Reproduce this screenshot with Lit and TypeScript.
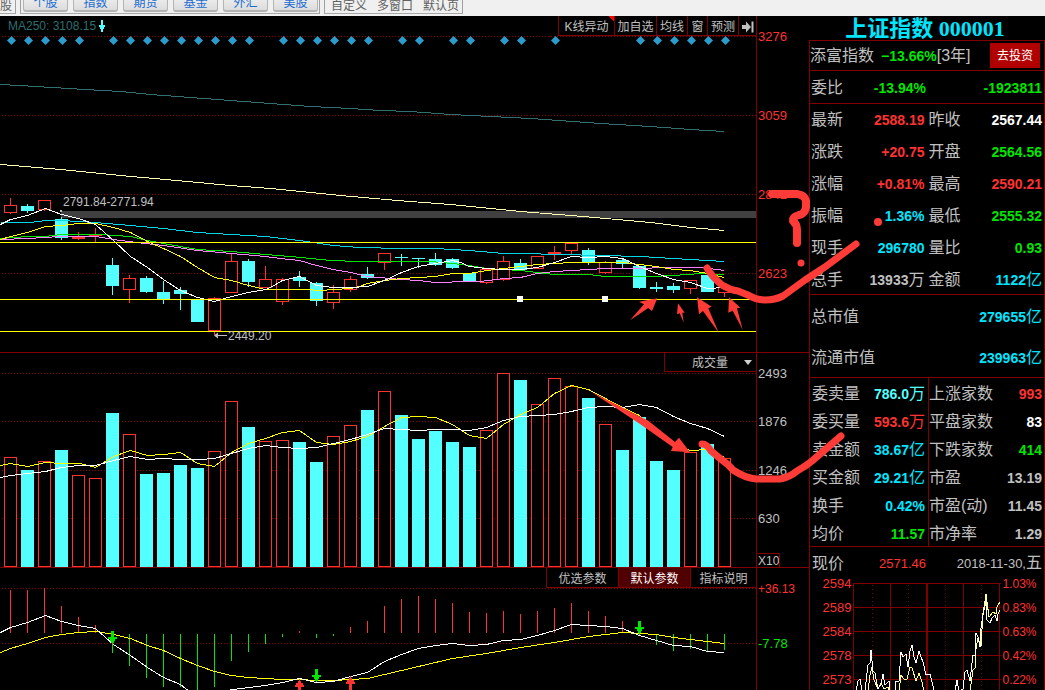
import { LitElement, html, svg, css } from "lit";
import { customElement } from "lit/decorators.js";

const STEP = 17;
const cx = (i: number) => 10 + STEP * i;

type Candle = [string, number, number, number, number];

// kind, high, body top, body bottom, low
const CANDLES: Candle[] = [
  ["r", 198, 205, 213, 214], ["c", 204, 206, 211, 213], ["r", 200, 200, 210, 211], ["c", 217, 219, 238, 240],
  ["r", 232, 237, 239, 240], ["r", 228, 235, 236, 242], ["c", 258, 265, 286, 295], ["r", 275, 278, 290, 303],
  ["c", 276, 278, 292, 293], ["c", 281, 292, 299, 304], ["c", 287, 290, 294, 310], ["c", 299, 299, 322, 322],
  ["r", 297, 298, 331, 335], ["r", 253, 261, 293, 293], ["c", 259, 261, 282, 287], ["r", 266, 279, 288, 288],
  ["r", 278, 279, 302, 305], ["c", 271, 277, 281, 287], ["c", 282, 283, 301, 306], ["r", 285, 292, 303, 309],
  ["r", 276, 279, 290, 292], ["c", 267, 274, 278, 279], ["r", 253, 253, 263, 270], ["c", 254, 257, 258, 266],
  ["c", 258, 258, 259, 268], ["c", 253, 259, 265, 266], ["c", 258, 259, 268, 269], ["c", 273, 273, 281, 281],
  ["r", 269, 269, 283, 284], ["r", 256, 261, 280, 281], ["c", 259, 263, 270, 270], ["r", 256, 256, 269, 269],
  ["r", 246, 252, 254, 260], ["r", 243, 243, 251, 254], ["c", 248, 250, 263, 265], ["r", 261, 262, 273, 274],
  ["c", 259, 260, 264, 268], ["c", 266, 266, 288, 289], ["c", 282, 287, 289, 292], ["c", 283, 286, 290, 293],
  ["r", 280, 280, 289, 294], ["c", 275, 275, 292, 292], ["r", 287, 287, 293, 297],
];

const VOLUMES = [
  457, 470, 461, 450, 475, 478, 413, 434, 474, 473, 465, 468, 451, 401, 427, 441, 440, 442, 462, 436, 425, 410,
  391, 415, 439, 431, 442, 447, 430, 373, 380, 404, 378, 386, 398, 424, 450, 417, 461, 470, 452, 444, 458,
];

const MACD = [
  590, 590, 588, 606, 617, 625, 653, 666, 678, 687, 687, 692, 687, 661, 652, 644, 637, 631, 638, 636, 627, 621,
  606, 599, 596, 599, 603, 612, 613, 611, 614, 611, 608, 603, 611, 616, 621, 636, 645, 651, 649, 651, 650,
];

const MARKED = [
  0, 1, 2, 3, 4, 6, 7, 8, 9, 10, 11, 12, 13, 14, 16, 17, 18, 19, 20, 21, 23, 24, 26, 27, 29, 30, 32, 37, 38, 39,
  40, 41, 42,
];

const PRICE_LINES: [string, string][] = [
  ["#2f6f70", "0,84 19,85 52,87 85,89 120,91 150,94 190,97 230,100 270,103 310,106 350,108 380,110 410,111 450,114 490,116 530,118 558,120 600,123 650,126 690,129 724,131"],
  ["#ffffb0", "0,164 60,169 120,175 176,180 230,185 270,188 340,195 397,200 450,204 520,211 583,216 650,222 690,227 724,230"],
  ["#00d8e8", "0,222 30,222 45,220 61,220 95,222 130,225 163,228 197,232 231,234 265,236 299,240 333,245 359,247 401,248 435,248 469,250 503,253 520,253 560,254 600,255 640,256 673,258 724,261"],
  ["#00e600", "0,238 27,236 45,236 61,234 100,234 130,236 147,240 163,243 197,249 231,251 265,254 290,256 330,260 359,261 430,261 452,263 469,265 486,268 520,270 537,272 554,274 588,274 605,276 650,276 673,275 700,273 724,274"],
  ["#ff80ff", "0,239 27,238 60,236 95,236 113,239 136,242 163,245 197,250 231,253 265,256 280,258 299,260 316,265 333,269 350,272 367,276 401,279 418,280 435,282 469,281 480,281 503,278 520,277 537,273 554,271 571,270 588,269 605,268 700,267 724,270"],
  ["#ffff00", "0,239 10,236 27,232 45,226 61,225 78,223 95,223 113,227 130,232 147,241 163,248 180,256 197,267 214,277 231,280 248,285 265,289 305,289 320,290 333,289 350,288 359,286 367,283 384,280 401,278 418,277 435,276 452,273 469,273 486,270 503,268 520,266 537,264 554,263 571,262 588,262 622,262 639,264 656,266 673,269 690,270 707,273 724,277"],
  ["#ffffff", "0,224 10,219 27,215 45,208 61,214 78,218 95,224 113,240 130,256 147,267 163,279 180,290 197,297 214,301 231,296 248,292 265,289 270,287 282,280 299,276 316,285 333,287 350,287 367,286 384,280 401,272 418,266 435,263 452,260 460,262 469,266 486,268 503,269 520,269 537,267 554,262 571,256 588,257 605,256 622,258 639,266 656,273 673,279 690,282 707,288 724,287"],
];

const VOLUME_LINES: [string, string][] = [
  ["#ffff00", "0,465 10,463 27,466 45,462 61,463 80,463 95,467 113,456 130,450 147,455 163,454 180,452 197,463 214,466 231,452 248,443 265,438 282,432 299,430 316,442 333,444 350,441 367,436 384,426 401,417 418,416 435,417 452,424 469,435 486,438 503,424 520,414 537,407 554,393 571,385 588,389 605,398 622,407 639,415 650,425 665,437 680,447 690,450 707,449 724,457"],
  ["#ffffff", "0,477 10,475 27,473 45,471 61,467 78,465 95,465 113,460 130,456 147,459 163,458 180,459 200,459 214,458 231,453 248,448 265,445 282,447 299,448 316,447 333,443 350,439 367,434 384,428 400,429 418,430 435,429 452,429 469,430 486,427 503,420 520,416 554,414 571,411 588,407 605,406 622,407 639,404 656,407 673,416 690,423 707,428 724,436"],
];

const MACD_LINES: [string, string][] = [
  ["#ffff00", "0,652 10,648 27,643 45,637 61,634 78,632 95,631 113,634 130,638 147,645 163,650 180,658 197,665 214,671 231,675 248,677 282,679 333,680 367,678 384,674 401,670 418,666 452,658 486,653 520,647 554,642 588,636 622,632 639,633 656,634 673,637 707,641 724,643"],
  ["#ffffff", "0,632 10,627 27,622 45,615 61,621 78,625 95,628 113,644 130,655 147,667 163,677 180,684 190,692 210,694 232,689 265,685 282,682 299,678 316,682 333,681 350,676 367,672 384,661 401,654 418,648 435,645 452,643 469,645 486,644 503,640 520,639 537,635 554,630 571,624 588,625 605,626 622,628 639,635 656,640 673,645 690,646 707,651 724,652"],
];

const lines = (set: [string, string][]) =>
  set.map(([color, points]) => svg`<polyline class="ma" stroke=${color} points=${points} transform="translate(0.5 0.5)"/>`);

const grid = (ys: number[]) =>
  ys.map((y) => svg`<line class="dots" x1="2" x2="100%" y1=${y + 0.5} y2=${y + 0.5}/>`);

const candle = ([kind, high, top, bottom, low]: Candle, i: number) => {
  const x = cx(i);
  const h = bottom - top;
  const hollow = kind === "r" && h > 2;
  return svg`
    <rect class=${kind} x=${x} y=${high} width="1" height=${Math.max(0, top - high)}/>
    <rect class=${kind} x=${x} y=${bottom} width="1" height=${Math.max(0, low - bottom)}/>
    ${hollow
      ? svg`<rect class="hollow" x=${x - 5.5} y=${top + 0.5} width="12" height=${h - 1}/>`
      : svg`<rect class=${kind} x=${x - 6} y=${top} width="13" height=${h}/>`}`;
};

const volumeBar = (top: number, i: number) =>
  CANDLES[i][0] === "r"
    ? svg`<rect class="hollow" x=${cx(i) - 5.5} y=${top + 0.5} width="12" height=${566 - top}/>`
    : svg`<rect class="c" x=${cx(i) - 6} y=${top} width="13" height=${567 - top}/>`;

const macdBar = (y: number, i: number) =>
  y < 633
    ? svg`<rect class="r" x=${cx(i)} y=${y} width="1" height=${633 - y}/>`
    : svg`<rect class="g" x=${cx(i)} y="634" width="1" height=${y - 634}/>`;

const down = (x: number, y: number) =>
  svg`<path class="g" d="M${x - 1} ${y}h3v6h3v2h-2v2h-1v2h-1v1h-1v-1h-1v-2h-1v-2h-2v-2h3z"/>`;
const up = (x: number, y: number) =>
  svg`<path class="r" d="M${x} ${y}h1v2h1v2h2v2h1v2h-3v7h-3v-7h-3v-2h1v-2h2v-2h1z"/>`;

const axis = (labels: [string, number][], tone: string, size = "") =>
  labels.map(([t, y]) => svg`<text class="tick ${tone} ${size}" x="1" y=${y + 5}>${t}</text>`);

type Row = [string, string, string, string?];

const table = (rows: Row[]) => html`
  <table>
    <tbody>
      ${rows.map(([label, value, tone, unit]) => html`
        <tr><th scope="row">${label}</th><td class=${tone}>${value}${unit ? html`<span class="unit">${unit}</span>` : ""}</td></tr>`)}
    </tbody>
  </table>`;

@customElement("top-bar")
export class TopBar extends LitElement {
  static styles = css`
    :host {
      display: flex;
      height: 14px;
      border-bottom: 2px solid #f0f0f0;
      background: #f0f0f0;
      font: 12px/14px "Liberation Sans", "Noto Sans CJK SC", sans-serif;
      color: #606060;
    }
    .group {
      display: flex;
      align-items: flex-end;
      box-sizing: border-box;
      border-right: 1px solid #a0a0a0;
      border-bottom: 1px solid #a8a8a8;
    }
    .first { width: 16px; }
    .markets { gap: 5px; width: 300px; margin-left: 4px; padding: 0 0 1px 2px; border-left: 1px solid #a0a0a0; }
    .links { gap: 10px; width: 139px; margin-left: 4px; padding-left: 6px; border-left: 1px solid #a0a0a0; }
    button {
      flex: none;
      box-sizing: border-box;
      width: 45px;
      height: 20px;
      padding: 2px 0 0;
      border: 1px solid #b4b4b4;
      border-bottom-width: 2px;
      border-radius: 3px;
      background: linear-gradient(#f4f4f4, #dcdcdc);
      font: inherit;
      line-height: 14px;
      color: #1c6cd0;
    }
    a { color: inherit; text-decoration: none; white-space: nowrap; }
  `;
  render() {
    return html`
      <div class="group first"><a href="#">股</a></div>
      <div class="group markets">
        ${["个股", "指数", "期货", "基金", "外汇", "美股"].map((t) => html`<button>${t}</button>`)}
      </div>
      <nav class="group links">
        ${["自定义", "多窗口", "默认页"].map((t) => html`<a href="#">${t}</a>`)}
      </nav>`;
  }
}

@customElement("chart-area")
export class ChartArea extends LitElement {
  static styles = css`
    :host {
      display: flex;
      flex-direction: column;
      font: 12px/16px "Liberation Sans", "Noto Sans CJK SC", sans-serif;
      color: #c0c0c0;
    }
    .panel { display: flex; position: relative; border-bottom: 1px solid #800000; }
    .price { height: 336px; }
    .volume { height: 214px; }
    .macd { height: 122px; border-bottom: 0; }
    .plot { position: relative; flex: 1; min-width: 0; }
    svg { display: block; width: 100%; height: 100%; overflow: hidden; }
    .axis { flex: none; width: 52px; border-left: 1px solid #800000; }
    .ma { fill: none; stroke-width: 1; shape-rendering: crispEdges; }
    .dots { stroke: #900000; stroke-width: 1; stroke-dasharray: 1 2; shape-rendering: crispEdges; }
    .level { fill: #ffff00; shape-rendering: crispEdges; }
    .r { fill: #ff3232; shape-rendering: crispEdges; }
    .c { fill: #54ffff; shape-rendering: crispEdges; }
    .g { fill: #00e600; shape-rendering: crispEdges; }
    .hollow { fill: #000000; stroke: #ff3232; shape-rendering: crispEdges; }
    .band { fill: #404040; }
    .mark { fill: #2c9ccc; }
    .light { fill: #c0c0c0; }
    .white { fill: #ffffff; }
    .note { font-size: 12px; fill: #c0c0c0; }
    .teal { font-size: 12px; fill: #2f6f70; }
    .tick { font-size: 13px; }
    .tick.small { font-size: 12px; }
    .red { fill: #ff3232; }
    .green { fill: #00e600; }
    .box { fill: none; stroke: #800000; }
    .tools {
      position: absolute;
      top: 0;
      right: 0;
      display: flex;
      border-bottom: 1px solid #800000;
      background: #000000;
    }
    button {
      box-sizing: border-box;
      height: 19px;
      padding: 2px 0 0;
      border: 0;
      border-left: 1px solid #800000;
      background: none;
      font: inherit;
      color: inherit;
      white-space: nowrap;
    }
    .w18 { width: 18px; } .w20 { width: 20px; } .w31 { width: 31px; } .w42 { width: 42px; } .w56 { width: 56px; }
    .hot { background: linear-gradient(225deg, #ff0000 4px, transparent 4px); }
    .w72 { width: 72px; } .w66 { width: 66px; }
    .on { background: #500000; color: #ffffff; }
    .glyph { width: 14px; height: 12px; margin: auto; }
    .pick { position: absolute; top: 0; right: 0; }
    .pick::after {
      content: "";
      position: absolute;
      top: 7px;
      right: 4px;
      border: 4px solid transparent;
      border-top: 5px solid #d0d0d0;
      border-bottom: 0;
      pointer-events: none;
    }
    select {
      display: block;
      box-sizing: border-box;
      width: 92px;
      height: 19px;
      padding: 2px 0 0 27px;
      appearance: none;
      border: 1px solid #800000;
      border-width: 0 0 1px 1px;
      border-radius: 0;
      background: #000000;
      font: inherit;
      color: inherit;
    }
  `;
  render() {
    return html`
      <section class="panel price">
        <div class="plot">
          <svg><g transform="translate(0 -16)">
            ${grid([36, 115, 194, 273])}
            <rect class="band" x="61" y="211" width="100%" height="7"/>
            <rect class="light" x="60" y="210" width="2" height="2"/>
            ${MARKED.map((i) => svg`<path class="mark" d="M${cx(i) + 1.5} 36l4.5 4.5l-4.5 4.5l-4.5-4.5z"/>`)}
            ${CANDLES.map(candle)}
            ${lines(PRICE_LINES)}
            ${[242, 299, 331].map((y) => svg`<rect class="level" x="0" y=${y} width="100%" height="1"/>`)}
            <rect class="white" x="517" y="296" width="6" height="6"/>
            <rect class="white" x="602" y="296" width="6" height="6"/>
            <text class="teal" x="8" y="30">MA250: 3108.15</text>
            <path class="c" d="M101 20h2v5h2v2h-1v2h-1v3h-2v-3h-1v-2h-1v-2h2z"/>
            <text class="note" x="63" y="206">2791.84-2771.94</text>
            <path class="light" d="M214 335.5l4-3v2.5h9v1h-9v2.5z"/>
            <text class="note" x="228" y="340">2449.20</text>
          </g></svg>
          <div class="tools">
            <button class="w56 hot">K线异动</button><button class="w42">加自选</button><button class="w31">均线</button><button class="w20">窗</button><button class="w31">预测</button><button class="w18" aria-label="展开"><svg class="glyph" viewBox="0 0 14 12"><path class="light" d="M1 4h4V0.500L10 6L5 11.500V8H1zM10.500 0.500h2v11h-2z"/></svg></button>
          </div>
        </div>
        <div class="axis"><svg><g transform="translate(0 -16)">
          ${axis([["3276", 36], ["3059", 115], ["2841", 194], ["2623", 273]], "red")}
        </g></svg></div>
      </section>
      <section class="panel volume">
        <div class="plot">
          <svg><g transform="translate(0 -353)">
            ${grid([373, 421, 470, 518])}
            ${VOLUMES.map(volumeBar)}
            ${lines(VOLUME_LINES)}
          </g></svg>
          <div class="pick"><select aria-label="指标"><option>成交量</option></select></div>
        </div>
        <div class="axis"><svg><g transform="translate(0 -353)">
          ${axis([["2493", 373], ["1876", 421], ["1246", 470], ["630", 518]], "light")}
          ${axis([["X10", 560]], "light", "small")}
          <rect class="box" x="-0.5" y="553.5" width="23" height="15"/>
        </g></svg></div>
      </section>
      <section class="panel macd">
        <div class="plot">
          <svg><g transform="translate(0 -568)">
            ${grid([588, 643])}
            ${MACD.map(macdBar)}
            ${lines(MACD_LINES)}
            ${down(112, 631)}${down(316, 669)}${down(639, 621)}
            ${up(299, 679)}${up(350, 676)}
          </g></svg>
          <div class="tools">
            <button class="w72">优选参数</button><button class="w72 on">默认参数</button><button class="w66">指标说明</button>
          </div>
        </div>
        <div class="axis"><svg><g transform="translate(0 -568)">
          ${axis([["+36.13", 588]], "red", "small")}
          ${axis([["-7.78", 643]], "green")}
        </g></svg></div>
      </section>`;
  }
}

@customElement("quote-panel")
export class QuotePanel extends LitElement {
  static styles = css`
    :host {
      display: flex;
      flex-direction: column;
      font: 16px/20px "Liberation Sans", "Noto Sans CJK SC", sans-serif;
      color: #c0c0c0;
    }
    h1 {
      margin: 0;
      height: 24px;
      padding-right: 4px;
      text-align: center;
      white-space: pre;
      font: bold 22px/26px "Liberation Serif", "Noto Sans CJK SC", serif;
      color: #00e6ff;
    }
    .frame { flex: 1; border: 1px solid #800000; border-bottom: 0; }
    .row { display: flex; align-items: center; border-bottom: 1px solid #800000; padding: 0 1px; }
    .fund { height: 29px; padding: 0 4px 0 0; }
    .fund b { margin-left: 7px; }
    .fund small { margin-right: auto; font-size: 16px; }
    .ratio { height: 30px; padding: 2px 2px 0 1px; }
    .ratio b { flex: 1; text-align: right; }
    .ratio b:first-of-type { flex: none; width: 83px; }
    b, td { font-size: 14px; font-weight: bold; }
    button {
      width: 50px;
      height: 25px;
      padding: 0;
      border: 0;
      background: #b00000;
      font: 12px/16px "Liberation Sans", "Noto Sans CJK SC", sans-serif;
      color: #ffffff;
    }
    table { flex: 1; min-width: 0; border-spacing: 0; }
    th { padding: 2px 0 0; font-weight: normal; text-align: left; white-space: nowrap; }
    td { padding: 2px 1px 0 0; text-align: right; white-space: nowrap; }
    .quote { height: 190px; gap: 3px; }
    .quote tr { height: 32px; }
    .caps { height: 82px; }
    .caps tr { height: 41px; }
    .flow { height: 168px; padding-left: 2px; gap: 2px; }
    .flow tr { height: 28px; }
    .flow th, .flow td { padding-top: 4px; }
    .flow table + table { box-sizing: border-box; height: 168px; border-left: 1px solid #800000; }
    .unit { font-weight: normal; font-size: 16px; }
    .red { color: #ff3232; }
    .green { color: #00e600; }
    .cyan { color: #00e6ff; }
    .sky { color: #54ffff; }
    .white { color: #ffffff; }
    .gray { color: #c0c0c0; }
    .now { display: flex; height: 33px; align-items: center; padding: 0 2px; white-space: nowrap; }
    .price { width: 82px; text-align: right; font-size: 13px; }
    .date { flex: 1; text-align: right; font-size: 13px; }
    .mini { display: flex; justify-content: center; padding-top: 3px; }
    svg { display: block; width: 148px; height: 107px; flex: none; overflow: hidden; }
    .scale { flex: 1; display: flex; flex-direction: column; gap: 8px; margin-top: -7px; font-size: 13px; line-height: 16px; height: 114px; overflow: hidden; }
    .left { text-align: right; padding-right: 1px; }
    .right { font-size: 12px; padding-left: 2px; }
    .line { fill: none; stroke: #800000; stroke-width: 1; shape-rendering: crispEdges; }
    .dot { stroke-dasharray: 1 3; }
    .thick { stroke-width: 2; }
    .trace { fill: none; stroke-width: 1; shape-rendering: crispEdges; }
  `;
  render() {
    return html`
      <h1>上证指数 000001</h1>
      <div class="frame">
        <div class="row fund">
          <span>添富指数</span><b class="green">−13.66%</b><small>[3年]</small><button>去投资</button>
        </div>
        <div class="row ratio"><span>委比</span><b class="green">-13.94%</b><b class="green">-1923811</b></div>
        <div class="row quote">
          ${table([["最新", "2588.19", "red"], ["涨跌", "+20.75", "red"], ["涨幅", "+0.81%", "red"], ["振幅", "1.36%", "cyan"], ["现手", "296780", "cyan"], ["总手", "13933", "gray", "万"]])}
          ${table([["昨收", "2567.44", "white"], ["开盘", "2564.56", "green"], ["最高", "2590.21", "red"], ["最低", "2555.32", "green"], ["量比", "0.93", "green"], ["金额", "1122", "cyan", "亿"]])}
        </div>
        <div class="row caps">
          ${table([["总市值", "279655", "cyan", "亿"], ["流通市值", "239963", "cyan", "亿"]])}
        </div>
        <div class="row flow">
          ${table([["委卖量", "786.0", "sky", "万"], ["委买量", "593.6", "red", "万"], ["卖金额", "38.67", "cyan", "亿"], ["买金额", "29.21", "cyan", "亿"], ["换手", "0.42%", "cyan"], ["均价", "11.57", "green"]])}
          ${table([["上涨家数", "993", "red"], ["平盘家数", "83", "white"], ["下跌家数", "414", "green"], ["市盈", "13.19", "gray"], ["市盈(动)", "11.45", "gray"], ["市净率", "1.29", "gray"]])}
        </div>
        <div class="now"><span>现价</span><span class="price red">2571.46</span><span class="date">2018-11-30,<span class="unit">五</span></span></div>
        <div class="mini">
          <div class="scale left red">${["2594", "2589", "2584", "2578", "2573"].map((t) => html`<span>${t}</span>`)}</div>
          <svg>
            ${[0, 24, 48, 72, 96].map((y) => svg`<line class="line" x1="0" x2="148" y1=${y + 0.5} y2=${y + 0.5}/>`)}
            ${[0, 37, 110, 146].map((x) => svg`<line class="line" y1="0" y2="110" x1=${x + 0.5} x2=${x + 0.5}/>`)}
            ${[19, 55, 92, 128].map((x) => svg`<line class="line dot" y1="2" y2="110" x1=${x + 0.5} x2=${x + 0.5}/>`)}
            <line class="line thick" x1="74" x2="74" y1="0" y2="110"/>
            <polyline class="trace" stroke="#ffff80" points="15,108 17,92 19,84 21,97 25,106 28,100 31,106 35,104 37,109"/>
            <polyline class="trace" stroke="#ffff80" points="46,108 48,92 51,96 54,96 57,84 59,85 63,98 66,90 69,99 71,109"/>
            <polyline class="trace" stroke="#ffff80" points="117,108 120,87 122,85 123,66 125,55 128,63 130,30 132,18 133,11 136,34 140,29 143,31 144,24 147,19"/>
            <polyline class="trace" stroke="#ffffff" points="3,108 5,98 7,96 9,108 12,108 14,90 15,82 17,80 18,67 20,88 22,90 23,96 25,106 28,101 30,91 32,102 36,98 37,109 42,109 43,98 46,98 48,69 50,74 53,71 55,84 57,68 59,62 61,74 63,80 66,68 68,74 70,79 73,92 77,91 81,107 83,110 102,108 104,97 106,108 110,106 112,89 114,87 117,98 119,80 120,72 122,72 123,50 125,54 127,64 128,45 130,32 133,18 134,37 137,40 139,35 142,32 144,38 145,31 147,27"/>
          </svg>
          <div class="scale right red">${["1.03%", "0.83%", "0.63%", "0.42%", "0.22%"].map((t) => html`<span>${t}</span>`)}</div>
        </div>
      </div>`;
  }
}

@customElement("app-root")
export class AppRoot extends LitElement {
  static styles = css`
    :host {
      display: flex;
      flex-direction: column;
      position: relative;
      min-height: 100vh;
      max-height: 100vh;
      overflow: hidden;
      background: #000000;
    }
    main { display: flex; flex: 1; min-height: 0; }
    chart-area { flex: 1; min-width: 0; }
    quote-panel { flex: none; width: 236px; }
    .ink { position: absolute; inset: 0; width: 100%; height: 100%; pointer-events: none; }
    .stroke { fill: none; stroke: #ff3b38; stroke-linecap: round; stroke-linejoin: round; stroke-width: 7; }
    .heavy { stroke-width: 8; }
    .solid { fill: #ff3b38; }
  `;
  render() {
    return html`
      <top-bar></top-bar>
      <main><chart-area></chart-area><quote-panel></quote-panel></main>
      <svg class="ink" aria-hidden="true">
        <path class="stroke" d="M707 268Q712 277 722 285Q730 290 738 291L748 295Q756 300 765 300Q775 300 783 296L805 280L825 267L856 244"/>
        <path class="stroke" d="M702 444Q707 444 711 451L722 460Q728 464 733 470Q745 478 756 479H780Q790 477 797 471Q806 466 812 461L841 436"/>
        <path class="stroke heavy" d="M772 194H797Q805 195 806 201V207Q805 214 799 215Q792 217 793 221Q797 224 797 230V243"/>
        <circle class="solid" cx="801" cy="263" r="3.500"/>
        <circle class="solid" cx="878" cy="222" r="4"/>
        <path class="solid" d="M630 320.300L644 304.300L639 301.700L657.300 298.300L652 311L648.300 308z"/>
        <path class="solid" d="M678 303.300L684.700 312.700H682.300L683.700 322.700L679.700 313.300L677 314.300z"/>
        <path class="solid" d="M697 297.300L711.700 306.700L708.300 308.300L718.700 332.700L703 311L699 314.300z"/>
        <path class="solid" d="M729 297.300L740.300 307.700L737 308.300L742.700 329.700L732.700 310.700L728.300 312.700z"/>
        <path class="solid" d="M577 384.500L648.300 420.700L675 442L679 437.700L690 452.300L671 451L672.700 447L640 424L590 391z"/>
      </svg>`;
  }
}
